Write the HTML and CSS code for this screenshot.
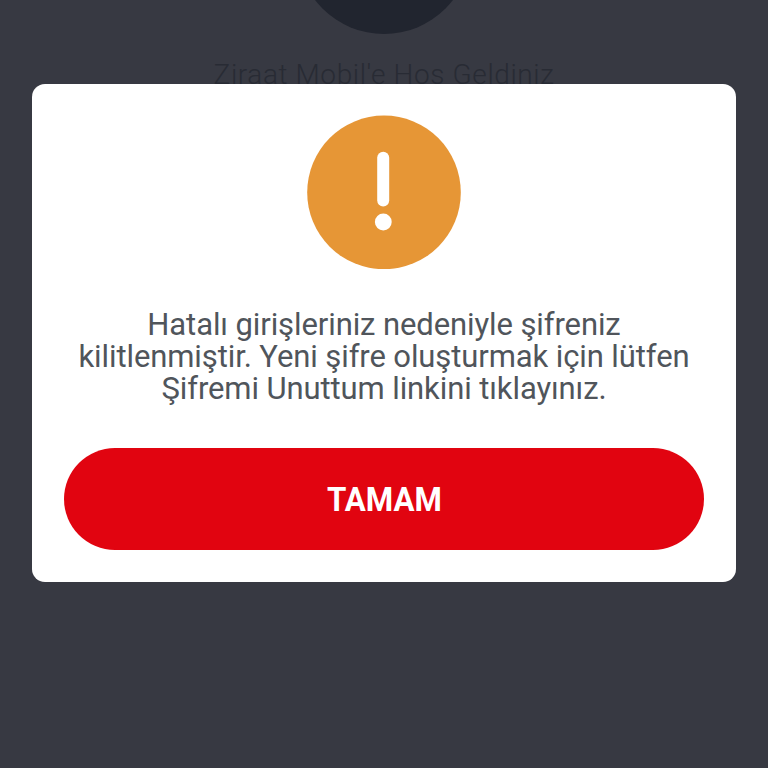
FILE: index.html
```
<!DOCTYPE html>
<html lang="tr">
<head>
  <meta charset="UTF-8">
  <title>Ziraat Mobil</title>
  <meta name="viewport" content="width=device-width, initial-scale=1">
  <link rel="stylesheet" href="styles.css">
</head>
<body>

  <div class="giris">
    <div class="profil"></div>
    <p class="karsilama">Ziraat Mobil'e Hoş Geldiniz</p>
  </div>

  <div class="perde">
    <div class="pencere" role="alertdialog">
      <svg class="uyari" viewBox="0 0 154 154" width="154" height="154">
        <circle cx="77" cy="77.4" r="76.8" fill="#e69636"/>
        <line x1="76.2" y1="42.8" x2="76.2" y2="85.5" stroke="#fff" stroke-width="12" stroke-linecap="round"/>
        <circle cx="76.3" cy="107" r="8.4" fill="#fff"/>
      </svg>
      <p class="mesaj">
        Hatalı girişleriniz nedeniyle şifreniz<br>
        kilitlenmiştir. Yeni şifre oluşturmak için lütfen<br>
        Şifremi Unuttum linkini tıklayınız.
      </p>
      <button class="tamam" type="button"><span>TAMAM</span></button>
    </div>
  </div>

</body>
</html>
```

FILE: styles.css
```
body {
  font-family: Roboto, "Liberation Sans", sans-serif;
  background: #373942;
  margin: 0;
  height: 768px;
  overflow: hidden;
}
.giris {
  display: flex;
  flex-direction: column;
  align-items: center;
}
.profil {
  width: 174px;
  height: 174px;
  margin-top: -140px;
  border-radius: 50%;
  background: #21252f;
}
.karsilama {
  margin: 23px 0 0;
  font-size: 28px;
  line-height: 36px;
  font-weight: 300;
  letter-spacing: 0.6px;
  color: #282b34;
  white-space: nowrap;
}
.perde {
  position: fixed;
  top: 0;
  left: 0;
  width: 100%;
  height: 100%;
  padding: 84px 32px 0;
  box-sizing: border-box;
}
.pencere {
  display: flex;
  flex-direction: column;
  align-items: center;
  height: 498px;
  padding: 31px 32px 32px;
  box-sizing: border-box;
  background: #fff;
  border-radius: 13px;
}
.uyari {
  flex: none;
}
.mesaj {
  margin: 40px 0 0;
  font-size: 31px;
  line-height: 32px;
  letter-spacing: -0.1px;
  text-align: center;
  color: #50555b;
  white-space: nowrap;
}
.tamam {
  width: 100%;
  height: 102px;
  margin-top: 42.5px;
  padding: 0;
  border: none;
  border-radius: 51px;
  background: #e10410;
  color: #fff;
  font-family: inherit;
  font-size: 34px;
  font-weight: 700;
  cursor: pointer;
}
.tamam span {
  display: inline-block;
  transform: scaleX(0.92);
}
```
